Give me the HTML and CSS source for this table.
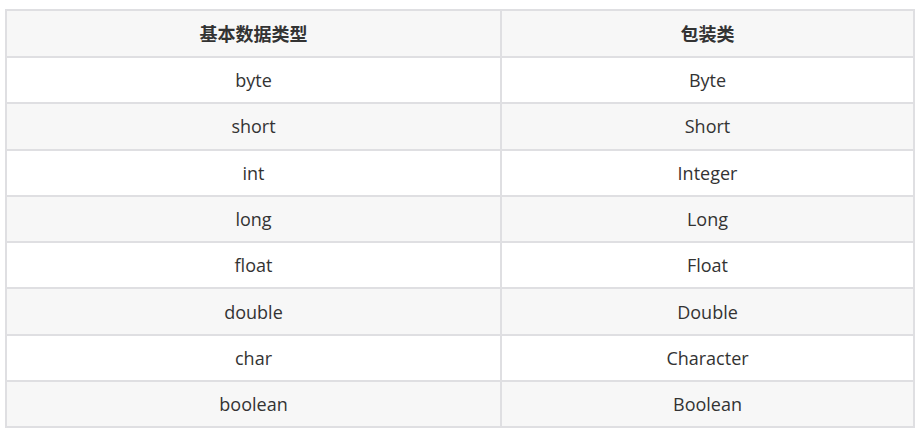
FILE: index.html
```html
<!DOCTYPE html>
<html lang="zh">
<head>
<meta charset="utf-8">
<link rel="stylesheet" href="styles.css">
</head>
<body>
<table class="types">
  <colgroup>
    <col class="col-basic">
    <col class="col-wrapper">
  </colgroup>
  <thead>
    <tr><th>基本数据类型</th><th>包装类</th></tr>
  </thead>
  <tbody>
    <tr><td>byte</td><td>Byte</td></tr>
    <tr><td>short</td><td>Short</td></tr>
    <tr><td>int</td><td>Integer</td></tr>
    <tr><td>long</td><td>Long</td></tr>
    <tr><td>float</td><td>Float</td></tr>
    <tr><td>double</td><td>Double</td></tr>
    <tr><td>char</td><td>Character</td></tr>
    <tr><td>boolean</td><td>Boolean</td></tr>
  </tbody>
</table>
</body>
</html>
```
FILE: styles.css
```css
html, body {
  margin: 0;
  padding: 0;
  background: #ffffff;
}
body {
  padding: 9px 0 0 5px;
  font-family: "Open Sans", "Noto Sans CJK SC", sans-serif;
  color: #333333;
  font-size: 18px;
}
.types {
  border-collapse: collapse;
  width: 908px;
  table-layout: fixed;
}
.col-basic {
  width: 495px;
}
.col-wrapper {
  width: 413px;
}
.types th,
.types td {
  border: 2px solid #dfdfe2;
  text-align: center;
  line-height: 24px;
  padding: 10.15px 12px;
}
.types th {
  font-weight: bold;
  padding: 10.5px 12px;
  background: #f7f7f7;
}
.types tbody tr:nth-child(odd) td {
  background: #ffffff;
}
.types tbody tr:nth-child(even) td {
  background: #f7f7f7;
}
```
